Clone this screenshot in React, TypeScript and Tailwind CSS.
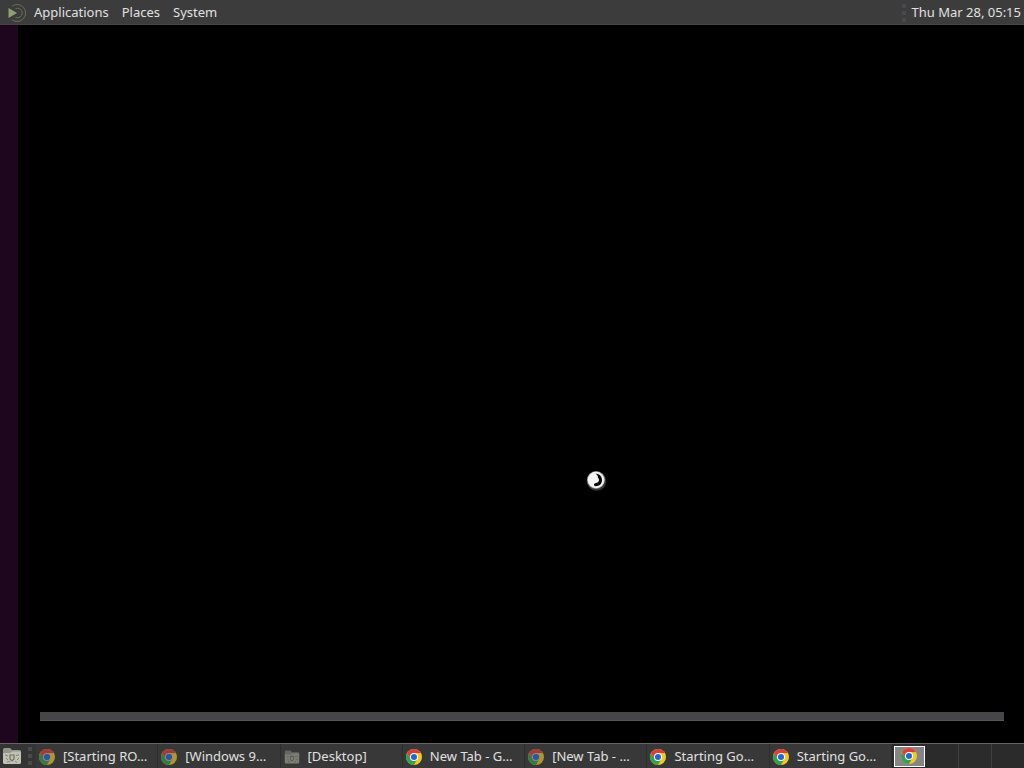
import React from "react";

type Task = { title: string; icon: "chrome" | "folder"; minimized?: boolean };

const tasks: Task[] = [
  { title: "[Starting RO…", icon: "chrome", minimized: true },
  { title: "[Windows 9…", icon: "chrome", minimized: true },
  { title: "[Desktop]", icon: "folder", minimized: true },
  { title: "New Tab - G…", icon: "chrome" },
  { title: "[New Tab - …", icon: "chrome", minimized: true },
  { title: "Starting Go…", icon: "chrome" },
  { title: "Starting Go…", icon: "chrome" },
];

function ChromeIcon({ dim = false }: { dim?: boolean }) {
  return (
    <svg viewBox="1 1 46 46" className={dim ? "size-4 shrink-0 opacity-65" : "size-4 shrink-0"} aria-hidden="true">
      <circle cx="24" cy="24" r="23" fill="#f3c921" />
      <path d="M4.1 12.5 A23 23 0 0 0 24 47 L33.5 29.5 L24 24 L14.5 29.5 Z" fill="#35a050" />
      <path d="M4.1 12.5 A23 23 0 0 1 43.9 12.5 L24 13 L14.5 29.5 Z" fill="#d8403a" />
      <circle cx="24" cy="24" r="11.5" fill={dim ? "#b9b9b9" : "#fff"} />
      <circle cx="24" cy="24" r="8.8" fill="#2467d4" />
    </svg>
  );
}

function FolderIcon({ dim = false }: { dim?: boolean }) {
  return (
    <svg viewBox="0 0 20 18" className={dim ? "h-4 w-4 shrink-0 opacity-50" : "h-[18px] w-5 shrink-0"} aria-hidden="true">
      <path d="M1 2.5 Q1 1 2.5 1 H8 L10 3 H17.5 Q19 3 19 4.5 V8 H1 Z" fill="#96968a" />
      <path d="M1 6 H8 L10 4.5 H19 V15.5 Q19 17 17.5 17 H2.5 Q1 17 1 15.5 Z" fill="#c0c1b1" />
      <path d="M3 8 L6 9 M4 11 L6 13 M14 8.5 L17 8 M15 13 L17 11 M5 15 L8 14.5 M13 14.5 L15 15.5" stroke="#85867a" fill="none" />
      <path d="M8 8 H12 V12 L10 14 L8 12 Z" fill="none" stroke="#70716a" strokeWidth="1.2" />
    </svg>
  );
}

function MenuLogo() {
  return (
    <svg viewBox="0 0 20 20" className="size-5" fill="none" aria-hidden="true">
      <path d="M1.5 5 L10 10 L1.5 15 Z" fill="#8da070" />
      <path d="M5 3.2 A8.5 8.5 0 1 1 5 16.8" stroke="#667052" strokeWidth="1" />
      <path d="M8.5 5.6 A4.8 4.8 0 1 1 8.5 14.4" stroke="#667052" strokeWidth="1" />
    </svg>
  );
}

function Grip() {
  return (
    <span className="flex w-1 shrink-0 flex-col gap-[3px]" aria-hidden="true">
      <span className="size-1 bg-[#49494d]" />
      <span className="size-1 bg-[#49494d]" />
      <span className="size-1 bg-[#49494d]" />
    </span>
  );
}

function BusyPointer() {
  return (
    <svg
      viewBox="0 0 22 22"
      className="absolute top-[58.1%] left-[58.2%] size-[22px] -translate-x-1/2 translate-y-[27px]"
      aria-hidden="true"
    >
      <circle cx="11.5" cy="12" r="9.8" fill="#343434" />
      <circle cx="11" cy="11" r="9" fill="#8a8a8a" />
      <circle cx="11" cy="11" r="8.3" fill="#f4f4f4" />
      <path
        d="M10.5 4.8 C14.5 4.8 17 7.5 17 11 C17 14.8 14.5 17.2 10.5 17.2 C9.5 17.2 9 16.5 9 15.5 V12.5 C9 10.5 10 9.5 11.5 9.5 C12.5 9.5 13.2 8.5 12.8 7.3 C12.4 6 11.5 5.4 10.5 4.8 Z"
        fill="#080808"
      />
      <path d="M8 11 C8 8.8 9.3 8 11 8 C12.7 8 14 9.2 14 11 C14 13 12.5 14 10.5 14 L9 15 Z" fill="#f4f4f4" />
    </svg>
  );
}

export default function App() {
  return (
    <div className="flex h-screen flex-col overflow-hidden bg-black font-['Noto_Sans',sans-serif] text-[13px] text-[#e0e0e0]">
      <header className="flex h-[25px] shrink-0 items-center justify-between border-b border-[#454545] bg-[#3c3c3c] pt-px pr-[3px] pl-[7px]">
        <nav className="flex items-center gap-[13px]">
          <button className="flex items-center gap-[7px]">
            <MenuLogo />
            Applications
          </button>
          <button>Places</button>
          <button>System</button>
        </nav>
        <div className="flex items-center gap-[6px]">
          <Grip />
          <button className="whitespace-nowrap">Thu Mar 28, 05:15</button>
        </div>
      </header>

      <main className="relative flex min-h-0 flex-1">
        <div className="w-[18px] shrink-0 bg-[#1d061e]" />
        <div className="flex flex-1 flex-col justify-end pr-5 pb-[22px] pl-[22px]">
          <div className="h-[9px] border-b border-[#565658] bg-[#464648]" />
        </div>
        <BusyPointer />
      </main>

      <footer className="flex h-[25px] shrink-0 items-center border-t border-[#666666] bg-[#343434]">
        <button aria-label="Show desktop" className="ml-[2px]">
          <FolderIcon />
        </button>
        <div className="ml-[6px] flex">
          <Grip />
        </div>
        <div className="ml-1 grid h-full min-w-0 flex-1 grid-cols-7">
          {tasks.map((task, i) => (
            <button
              key={i}
              className="flex min-w-0 items-center gap-2 border-r border-[#2e2e2e] bg-[#383838] pt-px pl-[3px] text-left"
            >
              {task.icon === "chrome" ? <ChromeIcon dim={task.minimized} /> : <FolderIcon dim={task.minimized} />}
              <span className="truncate">{task.title}</span>
            </button>
          ))}
        </div>
        <div className="flex h-full shrink-0 items-center bg-[#2b2b2c]">
          <div className="flex h-full w-[34px] items-center justify-center">
            <button
              aria-label="Workspace 1"
              className="flex h-[21px] w-[31px] items-center justify-center border border-white bg-[#858585]"
            >
              <ChromeIcon />
            </button>
          </div>
          <button aria-label="Workspace 2" className="h-full w-[33px] border-r border-[#404040]" />
          <button aria-label="Workspace 3" className="h-full w-[33px] border-r border-[#404040]" />
          <button aria-label="Workspace 4" className="h-full w-8" />
        </div>
      </footer>
    </div>
  );
}
